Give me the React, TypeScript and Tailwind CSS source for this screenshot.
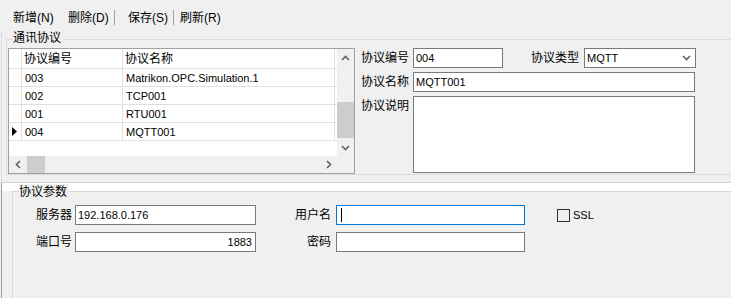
import React from "react";

const rows = [
  { code: "003", name: "Matrikon.OPC.Simulation.1" },
  { code: "002", name: "TCP001" },
  { code: "001", name: "RTU001" },
  { code: "004", name: "MQTT001", current: true },
];

const Chevron = ({ dir }: { dir: "up" | "down" | "left" | "right" }) => {
  const horiz = dir === "up" || dir === "down";
  const pts = {
    up: "1,5 4.5,1.5 8,5",
    down: "1,1 4.5,4.5 8,1",
    left: "5,1 1.5,4.5 5,8",
    right: "1,1 4.5,4.5 1,8",
  }[dir];
  return (
    <svg width={horiz ? 9 : 6} height={horiz ? 6 : 9} viewBox={horiz ? "0 0 9 6" : "0 0 6 9"}>
      <polyline points={pts} fill="none" stroke="#606060" strokeWidth="1.6" />
    </svg>
  );
};

const Field = ({ w, h = 20, value = "", right = false, focus = false }: { w: number; h?: number; value?: string; right?: boolean; focus?: boolean }) => (
  <div
    className={`bg-white border flex ${h > 20 ? "items-start" : "items-center"} ${right ? "justify-end pr-[3px]" : "pl-[2px]"} ${focus ? "border-[#0078d7]" : "border-[#7a7a7a]"}`}
    style={{ width: w, height: h }}
  >
    {focus && <span className="w-px h-[14px] bg-black ml-[2px]" />}
    <span className="text-[11px]">{value}</span>
  </div>
);

const App = () => {
  return (
    <div className="w-[731px] h-[298px] overflow-hidden bg-[#f0f0f0] text-[12px] leading-[16px] text-black whitespace-nowrap font-['Liberation_Sans','Noto_Sans_CJK_SC',sans-serif]">
      {/* toolbar */}
      <div className="h-[32px] flex items-center pl-[13px] pt-[3px]">
        <span className="w-[40px]">新增(N)</span>
        <span className="w-[40px] ml-[15px]">删除(D)</span>
        <span className="w-px h-[15px] bg-[#a0a0a0] ml-[6px]" />
        <span className="w-[40px] ml-[13px]">保存(S)</span>
        <span className="w-px h-[15px] bg-[#a0a0a0] ml-[5px]" />
        <span className="w-[40px] ml-[6px]">刷新(R)</span>
      </div>

      {/* top panel */}
      <div className="h-[150px] ml-px border-l border-[#dadada] pt-[7px]">
        <div className="relative ml-[4px] w-[760px] h-[136px] border border-[#dcdcdc]">
          <span className="absolute left-[6px] -top-[10px] bg-[#f0f0f0] pr-[2px]">通讯协议</span>
          <div className="flex mt-[8px] ml-px">
            {/* grid */}
            <div className="w-[347px] h-[126px] border border-[#a0a0a0] bg-white flex flex-col">
              <div className="flex h-[107px]">
                <div className="flex-1 flex flex-col">
                  <div className="flex h-[20px] border-b border-[#e0e0e0]">
                    <div className="w-[13px] border-r border-[#e0e0e0]" />
                    <div className="w-[101px] border-r border-[#e0e0e0] pl-[2px] flex items-center">协议编号</div>
                    <div className="w-[212px] border-r border-[#e0e0e0] pl-[2px] flex items-center">协议名称</div>
                  </div>
                  {rows.map((r) => (
                    <div key={r.code} className="flex h-[18px] border-b border-[#e0e0e0] text-[11px]">
                      <div className="w-[13px] border-r border-[#e0e0e0] flex items-center pl-[3px]">
                        {r.current && (
                          <svg width="6" height="9" viewBox="0 0 6 9">
                            <polygon points="0,0 5,4.5 0,9" fill="#000" />
                          </svg>
                        )}
                      </div>
                      <div className="w-[101px] border-r border-[#e0e0e0] pl-[3px] flex items-center">{r.code}</div>
                      <div className="w-[212px] border-r border-[#e0e0e0] pl-[3px] flex items-center">{r.name}</div>
                    </div>
                  ))}
                </div>
                <div className="w-[17px] bg-[#f0f0f0] flex flex-col">
                  <div className="h-[17px] flex items-center justify-center">
                    <Chevron dir="up" />
                  </div>
                  <div className="h-[36px]" />
                  <div className="h-[36px] bg-[#cdcdcd]" />
                  <div className="flex-1" />
                  <div className="h-[17px] flex items-center justify-center">
                    <Chevron dir="down" />
                  </div>
                </div>
              </div>
              <div className="flex h-[17px]">
                <div className="flex-1 bg-[#f0f0f0] flex">
                  <div className="w-[17px] flex items-center justify-center">
                    <Chevron dir="left" />
                  </div>
                  <div className="ml-px w-[18px] bg-[#cdcdcd]" />
                  <div className="flex-1" />
                  <div className="w-[17px] flex items-center justify-center">
                    <Chevron dir="right" />
                  </div>
                </div>
                <div className="w-[17px] bg-[#f0f0f0]" />
              </div>
            </div>

            {/* detail fields */}
            <div className="ml-[6px] flex flex-col gap-[4px]">
              <div className="flex items-center">
                <span className="w-[52px]">协议编号</span>
                <Field w={90} value="004" />
                <span className="w-[48px] ml-[28px]">协议类型</span>
                <div className="ml-[5px] w-[112px] h-[20px] bg-white border border-[#7a7a7a] flex items-center justify-between pl-[2px] pr-[4px]">
                  <span className="text-[11px]">MQTT</span>
                  <Chevron dir="down" />
                </div>
              </div>
              <div className="flex items-center">
                <span className="w-[52px]">协议名称</span>
                <Field w={282} value="MQTT001" />
              </div>
              <div className="flex items-start">
                <span className="w-[52px] pt-[2px]">协议说明</span>
                <Field w={282} h={77} />
              </div>
            </div>
          </div>
        </div>
      </div>

      {/* bottom panel */}
      <div className="h-[116px] ml-px border-l border-t border-[#a0a0a0] border-t-[#d4d4d4]">
        <div className="h-[8px] bg-white" />
        <div className="relative ml-[10px] w-[760px] h-[140px] border border-[#d8d8d8]">
          <span className="absolute left-[6px] -top-[8px] bg-[#f0f0f0] pr-[2px]">协议参数</span>
          <div className="flex flex-col gap-[7px] mt-[13px]">
            <div className="flex items-center">
              <span className="w-[59px] text-right">服务器</span>
              <div className="ml-[3px]">
                <Field w={181} value="192.168.0.176" />
              </div>
              <span className="w-[75px] text-right">用户名</span>
              <div className="ml-[5px]">
                <Field w={189} focus />
              </div>
              <span className="ml-[32px] w-[13px] h-[13px] border border-[#333333]" />
              <span className="ml-[3px] text-[11px]">SSL</span>
            </div>
            <div className="flex items-center">
              <span className="w-[59px] text-right">端口号</span>
              <div className="ml-[3px]">
                <Field w={181} value="1883" right />
              </div>
              <span className="w-[75px] text-right">密码</span>
              <div className="ml-[5px]">
                <Field w={189} />
              </div>
            </div>
          </div>
        </div>
      </div>
    </div>
  );
};

export default App;
